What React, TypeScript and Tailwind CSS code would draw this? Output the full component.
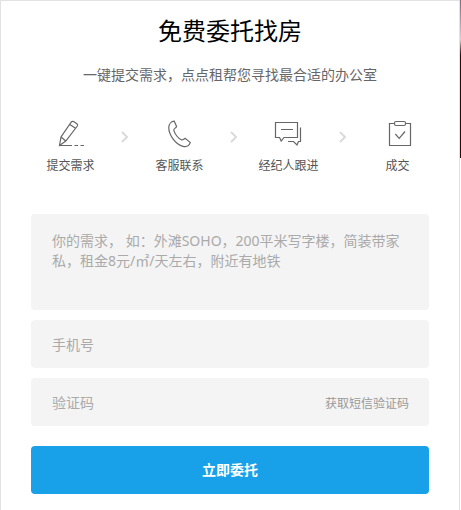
import { Fragment, type ReactNode } from "react";

const iconProps = {
    fill: "none",
    stroke: "#666",
    strokeWidth: 1.2,
    className: "h-[29px] w-[29px]",
    viewBox: "0 0 29 29",
    "aria-hidden": true,
};

const PencilIcon = () => (
    <svg {...iconProps}>
        <path d="M3.5 26.5 5 18 15.2 3.2Q16.2 1.8 17.6 2.6L20.9 4.7Q22.2 5.6 21.3 7L9.8 22 3.5 26.5ZM13.8 5.4l5.8 3.9M5 18l4.8 4" />
        <path d="M3.5 26.5H16M18.5 26.5h3.5M24.5 26.5h3.5" />
    </svg>
);

const PhoneIcon = () => (
    <svg {...iconProps}>
        <path d="M9.2 2.2C6.2 2.4 4 5 3.8 8.2C3.5 15.5 10.5 25.5 18 27.3C21.5 28.2 24.2 26.4 25.3 23.6L20.3 19.4C18.8 19.8 18 21.2 16.4 20.8C13.2 19.6 9.8 15 8.8 11.4C8.5 9.6 10.8 9.2 11.6 7.4L9.2 2.2Z" />
    </svg>
);

const ChatIcon = () => (
    <svg {...iconProps}>
        <path d="M1.5 3.5h22v15H10L7.2 22l-1.6-3.5H1.5v-15ZM7 10.5h12" />
        <path d="M26.5 8.5v14h-2L23 26l-3.5-3.5H14" />
    </svg>
);

const ClipboardIcon = () => (
    <svg {...iconProps}>
        <path d="M12 4.5H6.5v22h21v-22H22" />
        <rect x="11.5" y="2.5" width="11" height="4" rx="1.5" />
        <path d="m12.3 15 3.9 4.3 5.8-6.8" />
    </svg>
);

const ChevronIcon = () => (
    <svg viewBox="0 0 8 12" fill="none" stroke="#dadada" strokeWidth="2" className="mt-3 h-3 w-2 shrink-0" aria-hidden="true">
        <path d="m1 1 5 5-5 5" />
    </svg>
);

const steps: { label: string; icon: ReactNode }[] = [
    { label: "提交需求", icon: <PencilIcon /> },
    { label: "客服联系", icon: <PhoneIcon /> },
    { label: "经纪人跟进", icon: <ChatIcon /> },
    { label: "成交", icon: <ClipboardIcon /> },
];

export default function App() {
    return (
        <div className="flex min-h-screen bg-white font-['Noto_Sans','Noto_Sans_CJK_SC',sans-serif]">
            <main className="min-w-0 flex-1 border-x border-t border-[#e2e2e2] pb-4">
                <h1 className="pt-3 text-center text-2xl leading-9 text-black">免费委托找房</h1>
                <p className="mt-4 text-center text-sm leading-5 text-[#666]">一键提交需求，点点租帮您寻找最合适的办公室</p>

                {/* steps */}
                <ol className="mt-[34px] flex items-start pr-[11px] pl-[19px]">
                    {steps.map((step, i) => (
                        <Fragment key={step.label}>
                            {i > 0 && (
                                <li aria-hidden="true">
                                    <ChevronIcon />
                                </li>
                            )}
                            <li className="flex flex-1 flex-col items-center">
                                {step.icon}
                                <span className="mt-2.5 text-xs leading-4 whitespace-nowrap text-[#555]">{step.label}</span>
                            </li>
                        </Fragment>
                    ))}
                </ol>

                {/* form */}
                <form className="mt-10 px-[30px] text-sm" onSubmit={(e) => e.preventDefault()}>
                    <textarea
                        aria-label="你的需求"
                        placeholder="你的需求， 如：外滩SOHO，200平米写字楼，简装带家私，租金8元/㎡/天左右，附近有地铁"
                        className="block h-24 w-full resize-none rounded bg-[#f4f4f4] px-[21px] py-[17px] leading-5 outline-none placeholder:text-[#aaa]"
                    />
                    <input
                        type="tel"
                        aria-label="手机号"
                        placeholder="手机号"
                        className="mt-2.5 block h-12 w-full rounded bg-[#f4f4f4] px-[21px] outline-none placeholder:text-[#aaa]"
                    />
                    <div className="mt-2.5 flex h-12 items-center rounded bg-[#f4f4f4] pr-5 pl-[21px]">
                        <input
                            type="text"
                            aria-label="验证码"
                            placeholder="验证码"
                            className="h-full min-w-0 flex-1 outline-none placeholder:text-[#aaa]"
                        />
                        <button type="button" className="pt-1 text-xs text-[#999]">
                            获取短信验证码
                        </button>
                    </div>
                    <button type="submit" className="mt-5 h-12 w-full rounded bg-[#18a0e8] font-bold text-white">
                        立即委托
                    </button>
                </form>
            </main>

            {/* edge of the banner behind the card */}
            <div className="w-px shrink-0">
                <div className="h-[158px] bg-linear-to-b from-[#77707c] from-0% via-[#d8d0d4] via-25% to-[#20100e] to-35%" />
            </div>
        </div>
    );
}
